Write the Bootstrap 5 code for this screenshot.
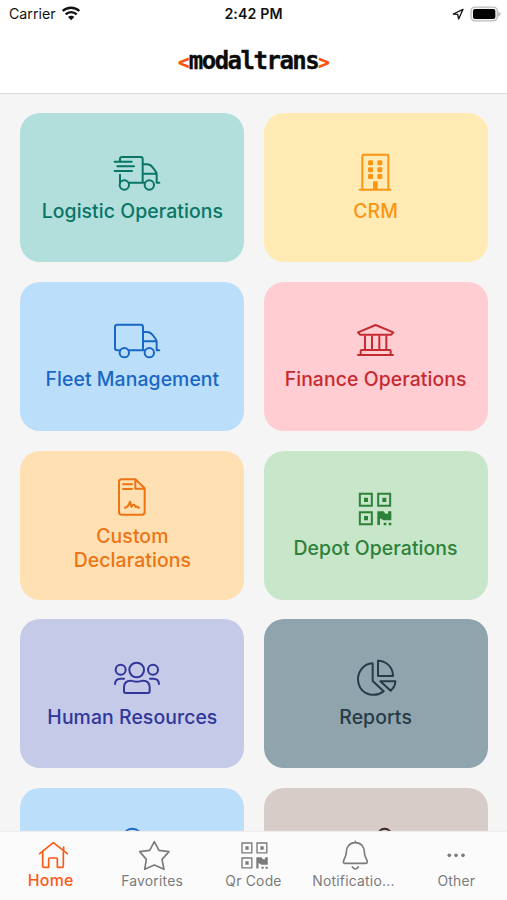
<!DOCTYPE html>
<html lang="en">
<head>
<meta charset="utf-8">
<meta name="viewport" content="width=device-width, initial-scale=1">
<title>modaltrans</title>
<link href="https://cdn.jsdelivr.net/npm/bootstrap@5.3.0/dist/css/bootstrap.min.css" rel="stylesheet">
<style>
body{font-family:Inter,"Liberation Sans",sans-serif;background:#f5f5f5;color:#111}
.status-bar{height:28px;font-size:14.2px;padding:0 8px 0 9px;line-height:28px}
.status-time{font-weight:600;letter-spacing:.1px;margin-left:-1px}
.brand-row{height:66px;border-bottom:1px solid #dcdcdc}
.brand-name{font:bold 24px/1 "DejaVu Sans Mono",monospace;letter-spacing:-1.5px;margin-top:1px;color:#0c0c0c;-webkit-text-stroke:.35px}
.brand-name span{color:#ff5208;font-size:19px;letter-spacing:-.8px}
.tile-grid{display:grid;grid-template-columns:224px 224px;grid-auto-rows:149px;gap:19.65px 19.2px;padding:19.3px 0 0 20.4px}
.tile{border-radius:20px;font-size:19.4px;font-weight:500;line-height:23.3px;letter-spacing:.08px;padding:1px 14px 0}
.tile-wrap{padding-left:40px;padding-right:40px}
.tile svg{width:37px;height:37px;margin-bottom:9px}
svg{overflow:visible;fill:none;stroke:currentColor;stroke-width:6;stroke-linecap:round;stroke-linejoin:round;flex:none}
.solid{fill:currentColor;stroke:none}
.t-teal{background:#b2dfdb;color:#087567}
.t-yellow{background:#ffebb3;color:#fb9516}
.t-blue{background:#bbdefb;color:#1967c4}
.t-red{background:#ffcdd2;color:#c62b32}
.t-orange{background:#ffe0b2;color:#ec7414}
.t-green{background:#c8e6c9;color:#2e8138}
.t-indigo{background:#c5cae9;color:#303799}
.t-slate{background:#90a4ae;color:#263b45}
.t-brown{background:#d7ccc8;color:#3e2723}
.tab-bar{height:68.5px;background:#fbfbfb;color:#7b7b7b;font-size:13.9px;letter-spacing:.22px;box-shadow:0 -1px 1px #eee}
.tab-bar a{flex:1 1 0;min-width:0;color:inherit;padding-top:9px}
.tab-bar svg{height:30px;width:32px;stroke-width:5}
.tab-bar .tab-label{line-height:18px;margin-top:1px}
.tab-bar .tab-on{color:#fb5a16}
.tab-bar .tab-on .tab-label{font-size:15.9px;font-weight:500;line-height:17px}
.tab-bar .icon-shift{margin-left:4px}
</style>
<script src="https://cdn.jsdelivr.net/npm/bootstrap@5.3.0/dist/js/bootstrap.bundle.min.js"></script>
</head>
<body>
<svg width="0" height="0" class="position-absolute" aria-hidden="true">
  <defs>
    <g id="qr">
      <path stroke-linecap="butt" stroke-linejoin="miter" d="M317.500 147.500h36v36h-36zM372.500 147.500h36v36h-36zM317.500 202.500h36v36h-36z"/>
      <path class="solid" d="M330 159h12v13h-12zM385 159h12v13h-12zM330 214h12v13h-12zM370 200h19l5 7h8v-7h10v27h-23l-11-6v20h-8zM389 234h8v8h-8zM404 234h8v8h-8z"/>
    </g>
  </defs>
</svg>
<div class="d-flex flex-column vh-100 overflow-hidden">
  <header class="bg-white">
    <div class="status-bar row gx-0">
      <div class="col d-flex align-items-center"><span>Carrier</span>
        <svg class="ms-1" width="20" height="15" viewBox="180 19 60 45" style="stroke-linecap:butt"><path stroke-width="7" d="M188 31c14-13 36-13 50 0M197 41c9-9 24-9 33 0"/><path class="solid" d="M204 49c5-5 14-5 19 0l-9.500 10z"/></svg>
      </div>
      <div class="col-auto status-time">2:42 PM</div>
      <div class="col d-flex align-items-center justify-content-end">
        <svg width="13" height="13" viewBox="599 22 39 39"><path stroke-width="4" d="M606 40l29-14-13 29-3-14z"/></svg>
        <svg class="ms-1" width="31" height="15" viewBox="645 18 93 45"><rect x="654" y="18.500" width="79" height="41" rx="12" stroke="#bdbdbd" stroke-width="4" fill="#f4f4f4"/><rect class="solid" x="660" y="24" width="67" height="30" rx="6" style="fill:#000"/><path d="M738 34c5 3 5 8 0 11z" fill="#bdbdbd" stroke="#bdbdbd" stroke-width="3"/></svg>
      </div>
    </div>
    <div class="brand-row d-flex align-items-center justify-content-center">
      <div class="brand-name"><span>&lt;</span>modaltrans<span>&gt;</span></div>
    </div>
  </header>

  <main class="flex-grow-1 overflow-hidden" style="min-height:0">
    <div class="tile-grid text-center">
      <div class="tile t-teal d-flex flex-column align-items-center justify-content-center">
        <svg viewBox="312 147 111 111"><path d="M330 167v-5q0-6 6-6h56q6 0 6 6v71M398 178h13q10 0 17 9l9 12q3 4 3 10v24h8M398 206h41M314 170h51M322 184h50M314 198h52M330 209v24M358 233h45"/><circle cx="343" cy="240" r="14"/><circle cx="418" cy="240" r="14"/></svg>
        Logistic Operations
      </div>
      <div class="tile t-yellow d-flex flex-column align-items-center justify-content-center">
        <svg viewBox="309 147 111 111"><path d="M325 252V153q0-4 4-4h70q4 0 4 4v99M317 254h92"/><path class="solid" d="M357 253v-20q0-4 3-4h7q4 0 4 4v20z"/><g class="solid"><rect x="342" y="166" width="15" height="15" rx="4"/><rect x="370" y="166" width="15" height="15" rx="4"/><rect x="342" y="187" width="15" height="15" rx="4"/><rect x="370" y="187" width="15" height="15" rx="4"/><rect x="342" y="207" width="15" height="15" rx="4"/><rect x="370" y="207" width="15" height="15" rx="4"/></g></svg>
        CRM
      </div>
      <div class="tile t-blue d-flex flex-column align-items-center justify-content-center">
        <svg viewBox="312 143 111 111"><path d="M327 228h-5q-7 0-7-7v-63q0-7 7-7h70q7 0 7 7v70M399 173h12q10 0 17 9l9 12q3 4 3 10v24h8M399 201h41M358 228h45"/><circle cx="343" cy="235" r="14"/><circle cx="418" cy="235" r="14"/></svg>
        Fleet Management
      </div>
      <div class="tile t-red d-flex flex-column align-items-center justify-content-center">
        <svg viewBox="309 143 111 111"><path d="M312 174l53-22 53 22-6 7h-94zM333 187v38M354 187v38M376 187v38M397 187v38M312 242h105M320 240v-10q0-3 3-3h84q3 0 3 3v10"/></svg>
        Finance Operations
      </div>
      <div class="tile tile-wrap t-orange d-flex flex-column align-items-center justify-content-center">
        <svg viewBox="312 103 111 111"><path d="M376 104h-41q-8 0-8 8v90q0 8 8 8h61q8 0 8-8v-71l-28-27v28h28M339 119h27M339 133h27M345 189c7 0 12-9 15-18 4 3 1 14 4 15 4-1 3-7 8-6 4 1 2 9 7 6 4-2 4 3 8 3"/></svg>
        <span>Custom Declarations</span>
      </div>
      <div class="tile t-green d-flex flex-column align-items-center justify-content-center">
        <svg viewBox="309 139 111 111"><use href="#qr"/></svg>
        Depot Operations
      </div>
      <div class="tile t-indigo d-flex flex-column align-items-center justify-content-center">
        <svg viewBox="312 144 111 111"><circle cx="380" cy="174" r="22"/><circle cx="332" cy="173" r="15"/><circle cx="429" cy="173" r="15"/><path d="M362 206c12 4 25 4 37 0q20 0 20 20v12q0 5-5 5h-67q-5 0-5-5v-12q0-20 20-20zM315 216q1-16 17-16h10M447 216q-1-16-17-16h-10"/></svg>
        Human Resources
      </div>
      <div class="tile t-slate d-flex flex-column align-items-center justify-content-center">
        <svg viewBox="309 144 111 111"><path d="M356 154v53l33 31c-27 20-66 10-75-22c-9-33 14-61 42-62zM372 146v46h45c0-26-20-46-45-46zM379 208h45c0 10-6 21-14 28z"/></svg>
        Reports
      </div>
      <div class="tile t-blue d-flex flex-column align-items-center justify-content-center">
        <svg viewBox="0 0 111 111"><circle cx="55" cy="30" r="28"/></svg>
        &nbsp;
      </div>
      <div class="tile t-brown d-flex flex-column align-items-center justify-content-center">
        <svg viewBox="0 0 111 111"><circle cx="83" cy="22" r="20"/></svg>
        &nbsp;
      </div>
    </div>
  </main>

  <nav class="tab-bar d-flex text-center flex-shrink-0 position-relative">
    <a href="#" class="tab-on text-decoration-none d-flex flex-column align-items-center">
      <svg class="icon-shift" viewBox="111 183 96 90"><path d="M119 221l41-33 42 33M191 211v-10M128 216v43q0 3 3 3h15v-25q0-3 3-3h20q3 0 3 3v25h15q3 0 3-3v-43"/></svg>
      <span class="tab-label">Home</span></a>
    <a href="#" class="text-decoration-none d-flex flex-column align-items-center">
      <svg class="icon-shift" viewBox="414 183 96 90"><path stroke-width="5" d="M463 185l14 26 30 4-21 23 6 30-29-13-29 13 5-30-20-23 30-4z"/></svg>
      <span class="tab-label">Favorites</span></a>
    <a href="#" class="text-decoration-none d-flex flex-column align-items-center">
      <svg viewBox="303 140 117 110"><use href="#qr"/></svg>
      <span class="tab-label">Qr Code</span></a>
    <a href="#" class="text-decoration-none d-flex flex-column align-items-center">
      <svg viewBox="258 183 96 90"><path stroke-width="5" d="M307 184v4M307 188c-18 0-27 13-27 28 0 17-9 20-9 31q0 3 4 3h64q4 0 4-3c0-11-9-14-9-31 0-15-9-28-27-28zM298 261q9 12 18 0"/></svg>
      <span class="tab-label" style="margin-left:-3px">Notificatio...</span></a>
    <a href="#" class="text-decoration-none d-flex flex-column align-items-center">
      <svg viewBox="562 183 96 90"><g class="solid"><circle cx="590" cy="226" r="5.500"/><circle cx="610" cy="226" r="5.500"/><circle cx="631" cy="226" r="5.500"/></g></svg>
      <span class="tab-label">Other</span></a>
  </nav>
</div>
</body>
</html>
